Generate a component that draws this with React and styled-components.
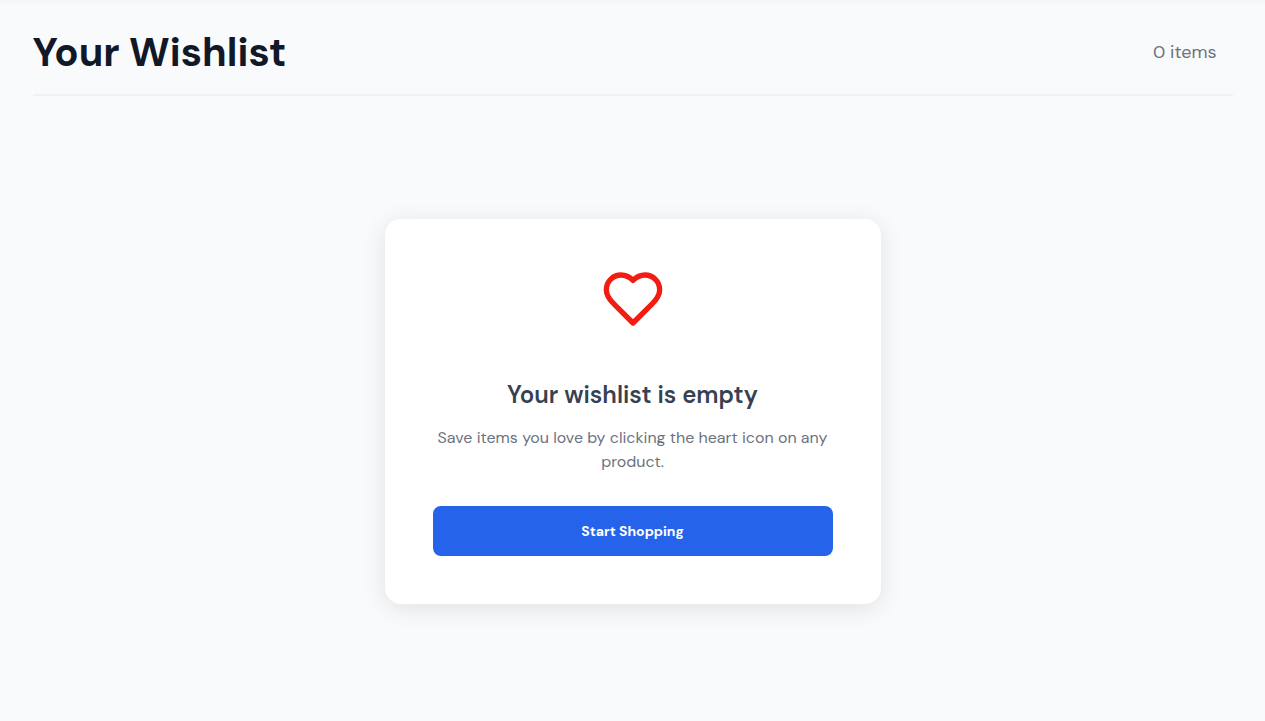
import React from "react";
import styled, { createGlobalStyle } from "styled-components";

const GlobalStyle = createGlobalStyle`
  *, *::before, *::after { box-sizing: border-box; }
  body {
    margin: 0;
    background: #f9fafc;
    color: #111827;
    font-family: "DM Sans", Inter, "Open Sans", sans-serif;
  }
  h1, h2, p { margin: 0; }
`;

const Page = styled.div`
  min-height: 100vh;
  padding: 0 32px 32px;
  background: linear-gradient(to bottom, #f4f5f7, #f9fafc 6px);
`;

const Container = styled.main`
  max-width: 1200px;
  margin: 0 auto;
`;

const Header = styled.header`
  display: flex;
  align-items: center;
  justify-content: space-between;
  padding: 28px 16px 18px 0;
  border-bottom: 2px solid #f0f1f3;
`;

const Title = styled.h1`
  font-size: 40px;
  line-height: 48px;
  font-weight: 700;
`;

const Count = styled.span`
  font-size: 18px;
  line-height: 24px;
  color: #6b7280;
`;

const EmptyState = styled.section`
  display: flex;
  justify-content: center;
  padding: 123px 0 64px;
`;

const Card = styled.div`
  display: flex;
  flex-direction: column;
  align-items: center;
  width: 100%;
  max-width: 496px;
  padding: 48px;
  border-radius: 16px;
  background: #ffffff;
  box-shadow: 0 4px 24px rgba(0, 0, 0, 0.1);
  text-align: center;
`;

const HeartIcon = styled.svg`
  width: 64px;
  height: 64px;
  margin-bottom: 48px;
  fill: none;
  stroke: #f31b12;
  stroke-width: 2;
  stroke-linecap: round;
  stroke-linejoin: round;
`;

const Heading = styled.h2`
  margin-bottom: 15px;
  font-size: 24px;
  line-height: 32px;
  font-weight: 600;
  color: #374151;
`;

const Message = styled.p`
  margin-bottom: 32px;
  font-size: 16px;
  line-height: 24px;
  color: #6b7280;
`;

const ShopButton = styled.button`
  width: 100%;
  height: 50px;
  border: 0;
  border-radius: 8px;
  background: #2563eb;
  color: #ffffff;
  font-family: inherit;
  font-size: 14px;
  line-height: 18px;
  font-weight: 700;
  cursor: pointer;
`;

export default function App() {
  return (
    <>
      <GlobalStyle />
      <Page>
        <Container>
          <Header>
            <Title>Your Wishlist</Title>
            <Count>0 items</Count>
          </Header>
          <EmptyState>
            <Card>
              <HeartIcon viewBox="0 0 24 24" aria-hidden="true">
                <path d="M19 14c1.49-1.46 3-3.21 3-5.5A5.5 5.5 0 0 0 16.5 3c-1.76 0-3 .5-4.5 2-1.5-1.5-2.74-2-4.5-2A5.5 5.5 0 0 0 2 8.5c0 2.3 1.5 4.05 3 5.5l7 7Z" />
              </HeartIcon>
              <Heading>Your wishlist is empty</Heading>
              <Message>Save items you love by clicking the heart icon on any product.</Message>
              <ShopButton type="button">Start Shopping</ShopButton>
            </Card>
          </EmptyState>
        </Container>
      </Page>
    </>
  );
}
